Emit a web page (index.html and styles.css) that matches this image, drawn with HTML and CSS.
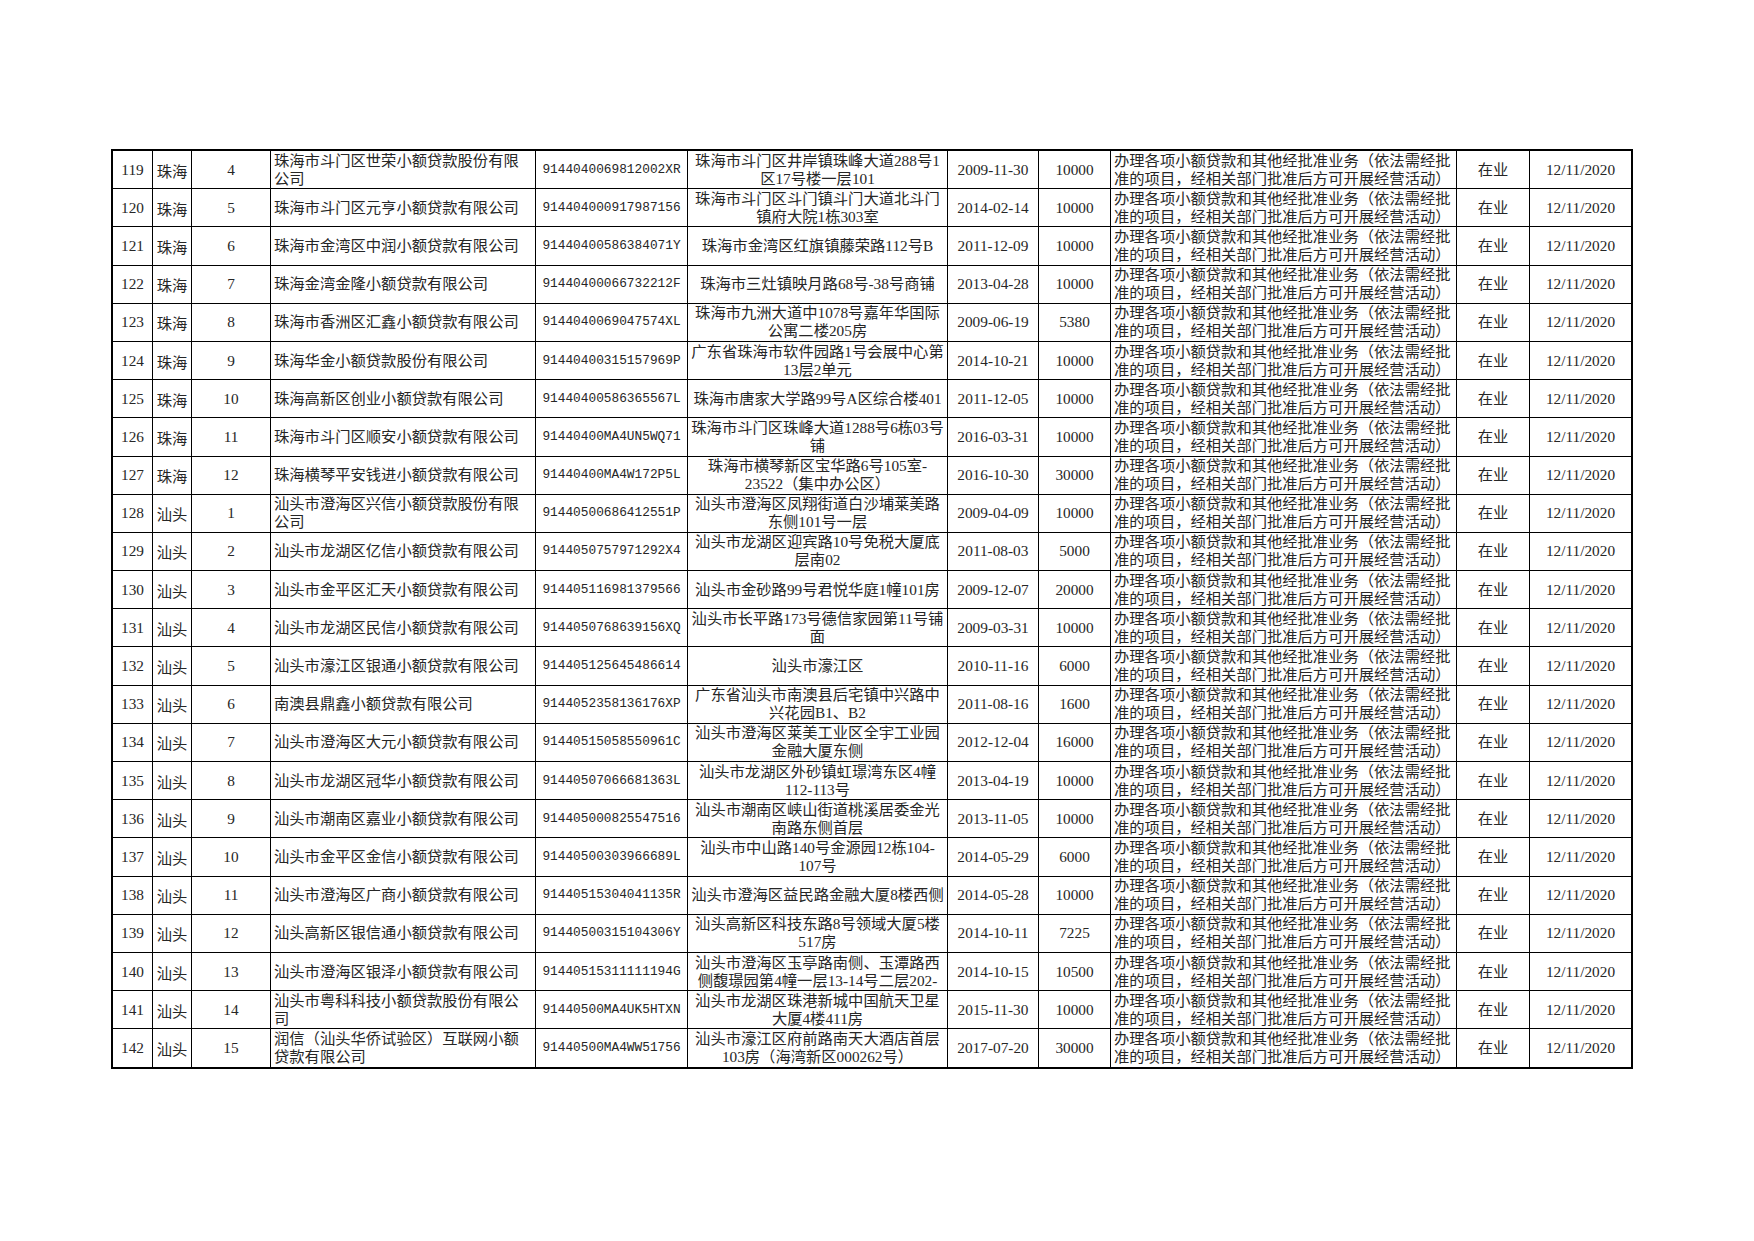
FILE: index.html
```html
<!DOCTYPE html>
<html lang="zh-CN">
<head>
<meta charset="utf-8">
<title>小额贷款公司名单</title>
<link rel="stylesheet" href="styles.css">
</head>
<body>
<div class="page">
  <div class="sheet">
    <div class="row"><div class="c c-no">119</div><div class="c c-city">珠海</div><div class="c c-idx">4</div><div class="c c-name">珠海市斗门区世荣小额贷款股份有限<br>公司</div><div class="c c-code">9144040069812002XR</div><div class="c c-addr">珠海市斗门区井岸镇珠峰大道288号1<br>区17号楼一层101</div><div class="c c-date">2009-11-30</div><div class="c c-cap">10000</div><div class="c c-biz">办理各项小额贷款和其他经批准业务（依法需经批<br>准的项目，经相关部门批准后方可开展经营活动）</div><div class="c c-st">在业</div><div class="c c-upd">12/11/2020</div></div>
    <div class="row"><div class="c c-no">120</div><div class="c c-city">珠海</div><div class="c c-idx">5</div><div class="c c-name">珠海市斗门区元亨小额贷款有限公司</div><div class="c c-code">914404000917987156</div><div class="c c-addr">珠海市斗门区斗门镇斗门大道北斗门<br>镇府大院1栋303室</div><div class="c c-date">2014-02-14</div><div class="c c-cap">10000</div><div class="c c-biz">办理各项小额贷款和其他经批准业务（依法需经批<br>准的项目，经相关部门批准后方可开展经营活动）</div><div class="c c-st">在业</div><div class="c c-upd">12/11/2020</div></div>
    <div class="row"><div class="c c-no">121</div><div class="c c-city">珠海</div><div class="c c-idx">6</div><div class="c c-name">珠海市金湾区中润小额贷款有限公司</div><div class="c c-code">91440400586384071Y</div><div class="c c-addr">珠海市金湾区红旗镇藤荣路112号B</div><div class="c c-date">2011-12-09</div><div class="c c-cap">10000</div><div class="c c-biz">办理各项小额贷款和其他经批准业务（依法需经批<br>准的项目，经相关部门批准后方可开展经营活动）</div><div class="c c-st">在业</div><div class="c c-upd">12/11/2020</div></div>
    <div class="row"><div class="c c-no">122</div><div class="c c-city">珠海</div><div class="c c-idx">7</div><div class="c c-name">珠海金湾金隆小额贷款有限公司</div><div class="c c-code">91440400066732212F</div><div class="c c-addr">珠海市三灶镇映月路68号-38号商铺</div><div class="c c-date">2013-04-28</div><div class="c c-cap">10000</div><div class="c c-biz">办理各项小额贷款和其他经批准业务（依法需经批<br>准的项目，经相关部门批准后方可开展经营活动）</div><div class="c c-st">在业</div><div class="c c-upd">12/11/2020</div></div>
    <div class="row"><div class="c c-no">123</div><div class="c c-city">珠海</div><div class="c c-idx">8</div><div class="c c-name">珠海市香洲区汇鑫小额贷款有限公司</div><div class="c c-code">9144040069047574XL</div><div class="c c-addr">珠海市九洲大道中1078号嘉年华国际<br>公寓二楼205房</div><div class="c c-date">2009-06-19</div><div class="c c-cap">5380</div><div class="c c-biz">办理各项小额贷款和其他经批准业务（依法需经批<br>准的项目，经相关部门批准后方可开展经营活动）</div><div class="c c-st">在业</div><div class="c c-upd">12/11/2020</div></div>
    <div class="row"><div class="c c-no">124</div><div class="c c-city">珠海</div><div class="c c-idx">9</div><div class="c c-name">珠海华金小额贷款股份有限公司</div><div class="c c-code">91440400315157969P</div><div class="c c-addr">广东省珠海市软件园路1号会展中心第<br>13层2单元</div><div class="c c-date">2014-10-21</div><div class="c c-cap">10000</div><div class="c c-biz">办理各项小额贷款和其他经批准业务（依法需经批<br>准的项目，经相关部门批准后方可开展经营活动）</div><div class="c c-st">在业</div><div class="c c-upd">12/11/2020</div></div>
    <div class="row"><div class="c c-no">125</div><div class="c c-city">珠海</div><div class="c c-idx">10</div><div class="c c-name">珠海高新区创业小额贷款有限公司</div><div class="c c-code">91440400586365567L</div><div class="c c-addr">珠海市唐家大学路99号A区综合楼401</div><div class="c c-date">2011-12-05</div><div class="c c-cap">10000</div><div class="c c-biz">办理各项小额贷款和其他经批准业务（依法需经批<br>准的项目，经相关部门批准后方可开展经营活动）</div><div class="c c-st">在业</div><div class="c c-upd">12/11/2020</div></div>
    <div class="row"><div class="c c-no">126</div><div class="c c-city">珠海</div><div class="c c-idx">11</div><div class="c c-name">珠海市斗门区顺安小额贷款有限公司</div><div class="c c-code">91440400MA4UN5WQ71</div><div class="c c-addr">珠海市斗门区珠峰大道1288号6栋03号<br>铺</div><div class="c c-date">2016-03-31</div><div class="c c-cap">10000</div><div class="c c-biz">办理各项小额贷款和其他经批准业务（依法需经批<br>准的项目，经相关部门批准后方可开展经营活动）</div><div class="c c-st">在业</div><div class="c c-upd">12/11/2020</div></div>
    <div class="row"><div class="c c-no">127</div><div class="c c-city">珠海</div><div class="c c-idx">12</div><div class="c c-name">珠海横琴平安钱进小额贷款有限公司</div><div class="c c-code">91440400MA4W172P5L</div><div class="c c-addr">珠海市横琴新区宝华路6号105室-<br>23522（集中办公区）</div><div class="c c-date">2016-10-30</div><div class="c c-cap">30000</div><div class="c c-biz">办理各项小额贷款和其他经批准业务（依法需经批<br>准的项目，经相关部门批准后方可开展经营活动）</div><div class="c c-st">在业</div><div class="c c-upd">12/11/2020</div></div>
    <div class="row"><div class="c c-no">128</div><div class="c c-city">汕头</div><div class="c c-idx">1</div><div class="c c-name">汕头市澄海区兴信小额贷款股份有限<br>公司</div><div class="c c-code">91440500686412551P</div><div class="c c-addr">汕头市澄海区凤翔街道白沙埔莱美路<br>东侧101号一层</div><div class="c c-date">2009-04-09</div><div class="c c-cap">10000</div><div class="c c-biz">办理各项小额贷款和其他经批准业务（依法需经批<br>准的项目，经相关部门批准后方可开展经营活动）</div><div class="c c-st">在业</div><div class="c c-upd">12/11/2020</div></div>
    <div class="row"><div class="c c-no">129</div><div class="c c-city">汕头</div><div class="c c-idx">2</div><div class="c c-name">汕头市龙湖区亿信小额贷款有限公司</div><div class="c c-code">9144050757971292X4</div><div class="c c-addr">汕头市龙湖区迎宾路10号免税大厦底<br>层南02</div><div class="c c-date">2011-08-03</div><div class="c c-cap">5000</div><div class="c c-biz">办理各项小额贷款和其他经批准业务（依法需经批<br>准的项目，经相关部门批准后方可开展经营活动）</div><div class="c c-st">在业</div><div class="c c-upd">12/11/2020</div></div>
    <div class="row"><div class="c c-no">130</div><div class="c c-city">汕头</div><div class="c c-idx">3</div><div class="c c-name">汕头市金平区汇天小额贷款有限公司</div><div class="c c-code">914405116981379566</div><div class="c c-addr">汕头市金砂路99号君悦华庭1幢101房</div><div class="c c-date">2009-12-07</div><div class="c c-cap">20000</div><div class="c c-biz">办理各项小额贷款和其他经批准业务（依法需经批<br>准的项目，经相关部门批准后方可开展经营活动）</div><div class="c c-st">在业</div><div class="c c-upd">12/11/2020</div></div>
    <div class="row"><div class="c c-no">131</div><div class="c c-city">汕头</div><div class="c c-idx">4</div><div class="c c-name">汕头市龙湖区民信小额贷款有限公司</div><div class="c c-code">9144050768639156XQ</div><div class="c c-addr">汕头市长平路173号德信家园第11号铺<br>面</div><div class="c c-date">2009-03-31</div><div class="c c-cap">10000</div><div class="c c-biz">办理各项小额贷款和其他经批准业务（依法需经批<br>准的项目，经相关部门批准后方可开展经营活动）</div><div class="c c-st">在业</div><div class="c c-upd">12/11/2020</div></div>
    <div class="row"><div class="c c-no">132</div><div class="c c-city">汕头</div><div class="c c-idx">5</div><div class="c c-name">汕头市濠江区银通小额贷款有限公司</div><div class="c c-code">914405125645486614</div><div class="c c-addr">汕头市濠江区</div><div class="c c-date">2010-11-16</div><div class="c c-cap">6000</div><div class="c c-biz">办理各项小额贷款和其他经批准业务（依法需经批<br>准的项目，经相关部门批准后方可开展经营活动）</div><div class="c c-st">在业</div><div class="c c-upd">12/11/2020</div></div>
    <div class="row"><div class="c c-no">133</div><div class="c c-city">汕头</div><div class="c c-idx">6</div><div class="c c-name">南澳县鼎鑫小额贷款有限公司</div><div class="c c-code">9144052358136176XP</div><div class="c c-addr">广东省汕头市南澳县后宅镇中兴路中<br>兴花园B1、B2</div><div class="c c-date">2011-08-16</div><div class="c c-cap">1600</div><div class="c c-biz">办理各项小额贷款和其他经批准业务（依法需经批<br>准的项目，经相关部门批准后方可开展经营活动）</div><div class="c c-st">在业</div><div class="c c-upd">12/11/2020</div></div>
    <div class="row"><div class="c c-no">134</div><div class="c c-city">汕头</div><div class="c c-idx">7</div><div class="c c-name">汕头市澄海区大元小额贷款有限公司</div><div class="c c-code">91440515058550961C</div><div class="c c-addr">汕头市澄海区莱美工业区全宇工业园<br>金融大厦东侧</div><div class="c c-date">2012-12-04</div><div class="c c-cap">16000</div><div class="c c-biz">办理各项小额贷款和其他经批准业务（依法需经批<br>准的项目，经相关部门批准后方可开展经营活动）</div><div class="c c-st">在业</div><div class="c c-upd">12/11/2020</div></div>
    <div class="row"><div class="c c-no">135</div><div class="c c-city">汕头</div><div class="c c-idx">8</div><div class="c c-name">汕头市龙湖区冠华小额贷款有限公司</div><div class="c c-code">91440507066681363L</div><div class="c c-addr">汕头市龙湖区外砂镇虹璟湾东区4幢<br>112-113号</div><div class="c c-date">2013-04-19</div><div class="c c-cap">10000</div><div class="c c-biz">办理各项小额贷款和其他经批准业务（依法需经批<br>准的项目，经相关部门批准后方可开展经营活动）</div><div class="c c-st">在业</div><div class="c c-upd">12/11/2020</div></div>
    <div class="row"><div class="c c-no">136</div><div class="c c-city">汕头</div><div class="c c-idx">9</div><div class="c c-name">汕头市潮南区嘉业小额贷款有限公司</div><div class="c c-code">914405000825547516</div><div class="c c-addr">汕头市潮南区峡山街道桃溪居委金光<br>南路东侧首层</div><div class="c c-date">2013-11-05</div><div class="c c-cap">10000</div><div class="c c-biz">办理各项小额贷款和其他经批准业务（依法需经批<br>准的项目，经相关部门批准后方可开展经营活动）</div><div class="c c-st">在业</div><div class="c c-upd">12/11/2020</div></div>
    <div class="row"><div class="c c-no">137</div><div class="c c-city">汕头</div><div class="c c-idx">10</div><div class="c c-name">汕头市金平区金信小额贷款有限公司</div><div class="c c-code">91440500303966689L</div><div class="c c-addr">汕头市中山路140号金源园12栋104-<br>107号</div><div class="c c-date">2014-05-29</div><div class="c c-cap">6000</div><div class="c c-biz">办理各项小额贷款和其他经批准业务（依法需经批<br>准的项目，经相关部门批准后方可开展经营活动）</div><div class="c c-st">在业</div><div class="c c-upd">12/11/2020</div></div>
    <div class="row"><div class="c c-no">138</div><div class="c c-city">汕头</div><div class="c c-idx">11</div><div class="c c-name">汕头市澄海区广商小额贷款有限公司</div><div class="c c-code">91440515304041135R</div><div class="c c-addr">汕头市澄海区益民路金融大厦8楼西侧</div><div class="c c-date">2014-05-28</div><div class="c c-cap">10000</div><div class="c c-biz">办理各项小额贷款和其他经批准业务（依法需经批<br>准的项目，经相关部门批准后方可开展经营活动）</div><div class="c c-st">在业</div><div class="c c-upd">12/11/2020</div></div>
    <div class="row"><div class="c c-no">139</div><div class="c c-city">汕头</div><div class="c c-idx">12</div><div class="c c-name">汕头高新区银信通小额贷款有限公司</div><div class="c c-code">91440500315104306Y</div><div class="c c-addr">汕头高新区科技东路8号领域大厦5楼<br>517房</div><div class="c c-date">2014-10-11</div><div class="c c-cap">7225</div><div class="c c-biz">办理各项小额贷款和其他经批准业务（依法需经批<br>准的项目，经相关部门批准后方可开展经营活动）</div><div class="c c-st">在业</div><div class="c c-upd">12/11/2020</div></div>
    <div class="row"><div class="c c-no">140</div><div class="c c-city">汕头</div><div class="c c-idx">13</div><div class="c c-name">汕头市澄海区银泽小额贷款有限公司</div><div class="c c-code">91440515311111194G</div><div class="c c-addr">汕头市澄海区玉亭路南侧、玉潭路西<br>侧馥璟园第4幢一层13-14号二层202-</div><div class="c c-date">2014-10-15</div><div class="c c-cap">10500</div><div class="c c-biz">办理各项小额贷款和其他经批准业务（依法需经批<br>准的项目，经相关部门批准后方可开展经营活动）</div><div class="c c-st">在业</div><div class="c c-upd">12/11/2020</div></div>
    <div class="row"><div class="c c-no">141</div><div class="c c-city">汕头</div><div class="c c-idx">14</div><div class="c c-name">汕头市粤科科技小额贷款股份有限公<br>司</div><div class="c c-code">91440500MA4UK5HTXN</div><div class="c c-addr">汕头市龙湖区珠港新城中国航天卫星<br>大厦4楼411房</div><div class="c c-date">2015-11-30</div><div class="c c-cap">10000</div><div class="c c-biz">办理各项小额贷款和其他经批准业务（依法需经批<br>准的项目，经相关部门批准后方可开展经营活动）</div><div class="c c-st">在业</div><div class="c c-upd">12/11/2020</div></div>
    <div class="row"><div class="c c-no">142</div><div class="c c-city">汕头</div><div class="c c-idx">15</div><div class="c c-name">润信（汕头华侨试验区）互联网小额<br>贷款有限公司</div><div class="c c-code">91440500MA4WW51756</div><div class="c c-addr">汕头市濠江区府前路南天大酒店首层<br>103房（海湾新区000262号）</div><div class="c c-date">2017-07-20</div><div class="c c-cap">30000</div><div class="c c-biz">办理各项小额贷款和其他经批准业务（依法需经批<br>准的项目，经相关部门批准后方可开展经营活动）</div><div class="c c-st">在业</div><div class="c c-upd">12/11/2020</div></div>
  </div>
</div>
</body>
</html>
```

FILE: styles.css
```css
html, body {
  margin: 0;
  padding: 0;
  background: #ffffff;
}

.page {
  width: 1754px;
  height: 1241px;
  box-sizing: border-box;
  padding: 149px 0 0 111px;
}

.sheet {
  display: grid;
  grid-template-columns: 39px 38px 78px 264px 151px 259px 90px 71px 345px 72px 101px;
  grid-auto-rows: 37.2px;
  gap: 1px;
  width: max-content;
  background: #000;
  border: 2px solid #000;
  font-family: "Liberation Serif", "Noto Sans CJK SC", serif;
  font-size: 15.3px;
  line-height: 18px;
  color: #262626;
}

.row {
  display: contents;
}

.c {
  background: #fff;
  display: flex;
  align-items: center;
  justify-content: center;
  text-align: center;
  overflow: hidden;
  white-space: nowrap;
  padding: 0 2px;
}

.c-name,
.c-biz {
  justify-content: flex-start;
  text-align: left;
  padding-left: 3px;
}

.c-city {
  font-family: "Noto Sans CJK SC", sans-serif;
}

.c-code {
  font-family: "Liberation Mono", monospace;
  font-size: 12.8px;
  padding: 0;
}

.c-addr {
  padding: 0;
}
```
